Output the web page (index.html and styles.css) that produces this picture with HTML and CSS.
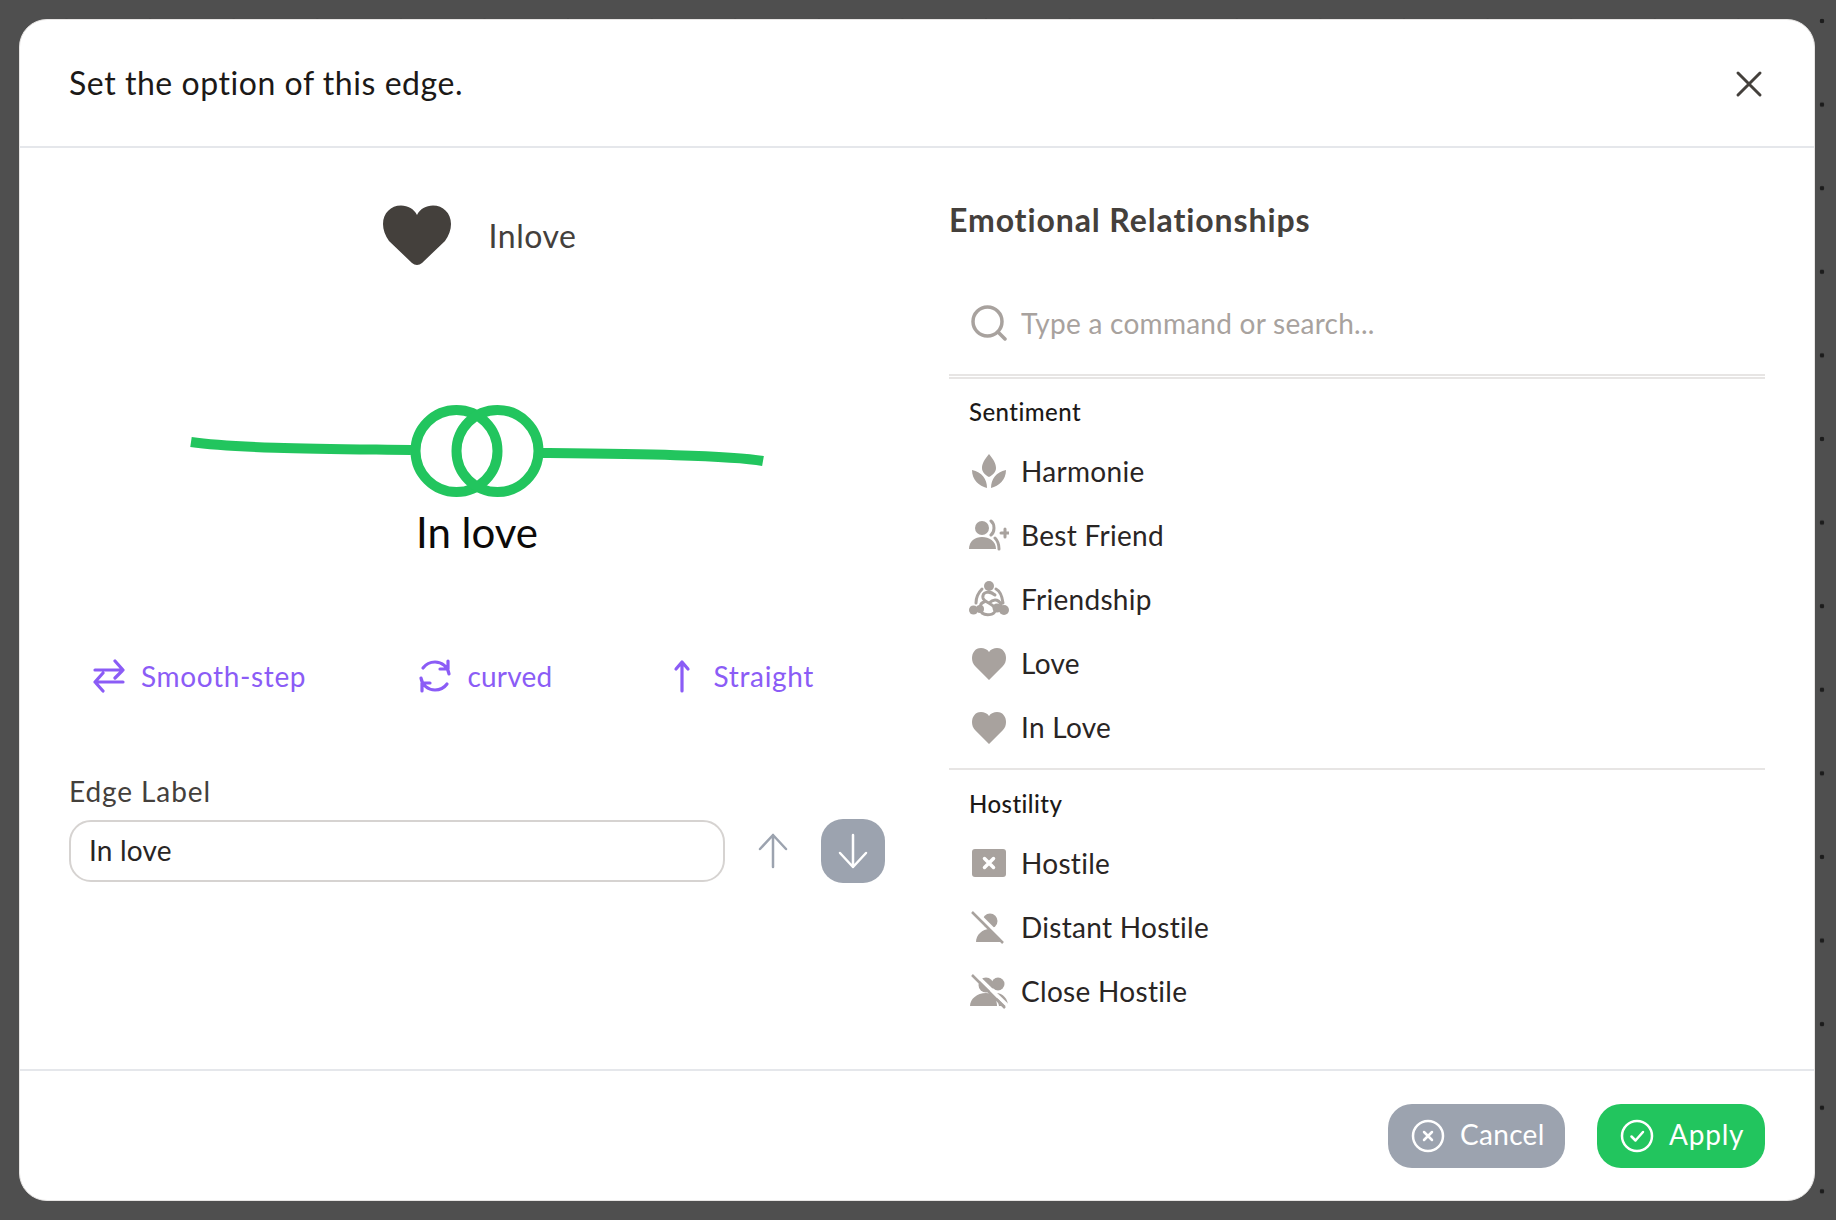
FILE: index.html
```html
<!DOCTYPE html>
<html lang="en">
<head>
<meta charset="utf-8">
<title>Edge options</title>
<link rel="stylesheet" href="styles.css">
</head>
<body>
<div class="backdrop">
  <div class="modal">
    <header class="modal-header">
      <h2 class="modal-title">Set the option of this edge.</h2>
      <button class="close-btn" aria-label="Close">
        <svg viewBox="0 0 28 28" class="close-icon"><path d="M3 3 25 25M25 3 3 25"/></svg>
      </button>
    </header>
    <main class="modal-body">
      <section class="left-col">
        <div class="selected-row">
          <svg class="selected-heart" viewBox="0 0 68 60"><path d="M34 10C31 4 25 .5 18 .5 8 .5 0 8 0 19c0 6 2 11 6 17l23 22c3 2.600 7 2.600 10 0l23-22c4-6 6-11 6-17C68 8 60 .5 50 .5 43 .5 37 4 34 10Z"/></svg>
          <span class="selected-name">Inlove</span>
        </div>
        <svg class="edge-preview" viewBox="0 0 816 110">
          <path class="edge-line" d="M122 47C170 54 280 54 342 55"/>
          <path class="edge-line" d="M473 58C560 59 660 60 694 66"/>
          <circle class="edge-ring" cx="387.500" cy="56" r="41"/>
          <circle class="edge-ring" cx="428.500" cy="56" r="41"/>
        </svg>
        <div class="edge-caption">In love</div>
        <div class="edge-types">
          <div class="edge-type edge-type-wide">
            <svg class="type-icon" viewBox="0 0 34 34"><path d="M3 11H31M23 2 31 11 23 19M31 23H3M11 14 3 23 11 32"/></svg>
            <span>Smooth-step</span>
          </div>
          <div class="edge-type edge-type-mid">
            <svg class="type-icon" viewBox="0 0 34 34"><path d="M31 15C30 8 24 3 17 3 12 3 8 5 5 9M30 2V10H22M3 19C4 26 10 31 17 31 22 31 26 29 29 25M4 32V24H12"/></svg>
            <span>curved</span>
          </div>
          <div class="edge-type edge-type-wide edge-type-last">
            <svg class="type-icon" viewBox="0 0 34 34"><path d="M17 32V3M11 10 17 3 23 10"/></svg>
            <span>Straight</span>
          </div>
        </div>
        <label class="field-label">Edge Label</label>
        <div class="field-row">
          <input class="field-input" value="In love">
          <button class="arrow-btn">
            <svg viewBox="0 0 32 36" class="arrow-icon"><path d="M16 34V2M3 16 16 2 29 16"/></svg>
          </button>
          <button class="arrow-btn arrow-btn-active">
            <svg viewBox="0 0 32 36" class="arrow-icon"><path d="M16 2V34M3 20 16 34 29 20"/></svg>
          </button>
        </div>
      </section>
      <section class="right-col">
        <h3 class="list-heading">Emotional Relationships</h3>
        <div class="search-row">
          <svg class="search-icon" viewBox="0 0 36 36"><circle cx="16.500" cy="16.500" r="14.500"/><path d="M27 27 34 34"/></svg>
          <input class="search-input" placeholder="Type a command or search...">
        </div>
        <div class="group group-first">
          <div class="group-title">Sentiment</div>
          <div class="item">
            <svg class="item-icon" viewBox="0 0 40 36"><path d="M20 1C15 7 13 11 13 15 13 19 16 22 20 24 24 22 27 19 27 15 27 11 25 7 20 1ZM3 17C3 27 10 33 18 35 18 26 13 19 3 17ZM37 17C37 27 30 33 22 35 22 26 27 19 37 17Z"/></svg>
            <span>Harmonie</span>
          </div>
          <div class="item">
            <svg class="item-icon" viewBox="0 0 40 36"><circle cx="13" cy="11" r="7"/><path d="M0 32C0 24 6 20 13 20 20 20 27 24 27 32Z"/><path class="thin" d="M22 4C26 7 26 15 22 18M30 32C30 27 29 24 26 21M36 12V20M32 16H40"/></svg>
            <span>Best Friend</span>
          </div>
          <div class="item">
            <svg class="item-icon" viewBox="0 0 40 36"><circle cx="20" cy="5" r="5"/><circle cx="4.500" cy="29" r="4.500"/><circle cx="11" cy="28" r="4"/><circle cx="35" cy="29" r="5"/><circle cx="28" cy="27" r="4.500"/><path class="thin" d="M13 8C9 12 7 16 7 22M27 8C31 10 33 14 34 22M26 14C20 9 13 11 14 17 15 22 28 23 26 30 25 34 17 35 13 32M13 32C10 27 11 22 15 21M20 22C26 16 31 20 32 24"/></svg>
            <span>Friendship</span>
          </div>
          <div class="item">
            <svg class="item-icon" viewBox="0 0 36 36"><path d="M10 3C4 3 1 8 1 13 1 16 2 19 4 21L18 35 32 21C34 19 35 16 35 13 35 8 32 3 26 3 23 3 20 4 18 7 16 4 13 3 10 3Z"/></svg>
            <span>Love</span>
          </div>
          <div class="item">
            <svg class="item-icon" viewBox="0 0 36 36"><path d="M10 3C4 3 1 8 1 13 1 16 2 19 4 21L18 35 32 21C34 19 35 16 35 13 35 8 32 3 26 3 23 3 20 4 18 7 16 4 13 3 10 3Z"/></svg>
            <span>In Love</span>
          </div>
        </div>
        <div class="group">
          <div class="group-title">Hostility</div>
          <div class="item">
            <svg class="item-icon" viewBox="0 0 36 36"><rect x="1" y="4" width="34" height="28" rx="3"/><path class="cross" d="M13.500 13.500 22.500 22.500M22.500 13.500 13.500 22.500"/></svg>
            <span>Hostile</span>
          </div>
          <div class="item">
            <svg class="item-icon" viewBox="0 0 36 36"><circle cx="19" cy="12" r="7.500"/><path d="M5 33C5 26 11 20 19 20 26 20 30 26 30 33Z"/><path class="slash-gap" d="M4 2 35 33"/><path class="slash" d="M1 3 32 34"/></svg>
            <span>Distant Hostile</span>
          </div>
          <div class="item">
            <svg class="item-icon" viewBox="0 0 40 36"><circle cx="17" cy="12" r="7.500"/><path d="M1 33C1 26 8 20 17 20 24 20 28 26 28 33Z"/><circle cx="29" cy="11" r="6.500"/><path d="M27 20C34 20 39 26 39 33H30Z"/><path class="slash-gap" d="M6 1 39 33"/><path class="slash" d="M3 2 36 35"/></svg>
            <span>Close Hostile</span>
          </div>
        </div>
      </section>
    </main>
    <footer class="modal-footer">
      <button class="action action-cancel">
        <svg class="action-icon" viewBox="0 0 34 34"><circle cx="17" cy="17" r="15"/><path d="M13 13 21 21M21 13 13 21"/></svg>
        <span>Cancel</span>
      </button>
      <button class="action action-apply">
        <svg class="action-icon" viewBox="0 0 34 34"><circle cx="17" cy="17" r="15"/><path d="M11.500 17.500 15.500 21.500 23 13"/></svg>
        <span>Apply</span>
      </button>
    </footer>
  </div>
</div>
</body>
</html>
```
FILE: styles.css
```css
* { box-sizing: border-box; }
html, body { margin: 0; height: 100%; }
body { font-family: "Lato", "Noto Sans", sans-serif; color: #292524; font-variant-ligatures: none; }
button { font-family: inherit; border: 0; background: none; padding: 0; font-variant-ligatures: none; }
input { font-family: inherit; font-variant-ligatures: none; }

.backdrop {
  height: 1220px;
  padding: 19px 21px 19px 19px;
  background-color: #4f4f4f;
  background-image: radial-gradient(circle at center, #1c1c1c 0, #1c1c1c 2px, transparent 2.6px);
  background-size: 83.6px 83.6px;
  background-position: 1780.2px -20.8px;
}
.modal {
  height: 100%;
  background: #fff;
  border-radius: 28px;
  border: 1px solid #e7e5e4;
  display: flex;
  flex-direction: column;
  overflow: hidden;
}
.modal-header {
  height: 128px;
  flex: none;
  border-bottom: 2px solid #e5e7eb;
  padding: 0 49px;
  display: flex;
  align-items: center;
  justify-content: space-between;
}
.modal-title { margin: 0 0 2px; font-size: 32px; font-weight: 400; color: #1c1917; letter-spacing: 0.55px; }
.close-btn { width: 28px; height: 28px; margin-right: 2px; margin-bottom: -2px; }
.close-icon { width: 28px; height: 28px; display: block; fill: none; stroke: #44403c; stroke-width: 3; stroke-linecap: round; }

.modal-body {
  flex: 1;
  display: grid;
  grid-template-columns: 816px 816px;
  column-gap: 64px;
  padding: 0 49px;
}
.left-col { display: flex; flex-direction: column; padding-top: 52px; }
.selected-row { display: flex; align-items: center; justify-content: center; gap: 38px; height: 70px; padding-left: 5px; }
.selected-heart { width: 68px; height: 60px; fill: #44403c; }
.selected-name { font-size: 32px; color: #44403c; letter-spacing: 0.5px; }
.edge-preview { width: 816px; height: 110px; display: block; margin-top: 125px; flex: none; }
.edge-line { fill: none; stroke: #22c55e; stroke-width: 10; }
.edge-ring { fill: none; stroke: #22c55e; stroke-width: 10; }
.edge-caption { font-size: 42px; line-height: 54px; text-align: center; color: #0c0a09; }
.edge-types { display: flex; justify-content: space-between; padding: 0 71px 0 23px; height: 48px; margin-top: 93px; }
.edge-type { display: flex; align-items: center; gap: 15px; color: #8b5cf6; font-size: 28px; letter-spacing: 0.2px; }
.edge-type-mid { margin-left: 0; }
.edge-type-wide { letter-spacing: 0.65px; }
.edge-type-last { gap: 15px; }
.type-icon { width: 34px; height: 34px; fill: none; stroke: #8b5cf6; stroke-width: 3.2; stroke-linecap: round; stroke-linejoin: round; }
.field-label { display: block; font-size: 28px; line-height: 38px; color: #44403c; margin-top: 72px; letter-spacing: 0.9px; }
.field-row { display: flex; align-items: center; margin-top: 9px; }
.field-input { width: 656px; height: 62px; border: 2px solid #d6d3d1; border-radius: 22px; padding: 0 18px 3px; font-size: 28px; color: #292524; outline: 0; letter-spacing: 0.2px; }
.arrow-btn { width: 64px; height: 64px; border-radius: 22px; margin-left: 16px; display: flex; align-items: center; justify-content: center; }
.arrow-btn-active { background: #9ca3af; margin-left: 0; }
.field-input + .arrow-btn { margin-left: 16px; margin-right: 16px; }
.arrow-icon { width: 32px; height: 36px; fill: none; stroke: #9ca3af; stroke-width: 2.500; stroke-linecap: round; stroke-linejoin: round; }
.arrow-btn-active .arrow-icon { stroke: #fff; }

.right-col { display: flex; flex-direction: column; padding-top: 48px; }
.list-heading { margin: 0; font-size: 32px; line-height: 48px; font-weight: 700; color: #44403c; letter-spacing: 0.9px; }
.search-row { height: 104px; margin-top: 28px; padding: 0 20px 0 22px; display: flex; align-items: center; gap: 14px; border-bottom: 2px solid #e7e5e4; }
.search-icon { width: 36px; height: 36px; flex: none; fill: none; stroke: #a8a29e; stroke-width: 3.5; stroke-linecap: round; }
.search-input { flex: 1; height: 48px; border: 0; outline: 0; padding: 0; font-size: 28px; color: #292524; letter-spacing: 0.26px; }
.search-input::placeholder { color: #a8a29e; opacity: 1; }
.group { padding: 16px 20px 0; }
.group-first { padding-top: 15px; border-top: 2px solid #e7e5e4; margin-top: 1px; border-bottom: 2px solid #e7e5e4; height: 393px; }
.group-title { font-size: 24px; line-height: 36px; font-weight: 500; color: #1c1917; margin-bottom: 9px; letter-spacing: 0.45px; }
.item { height: 64px; display: flex; align-items: center; gap: 12px; font-size: 28px; color: #292524; letter-spacing: 0.3px; }
.item-icon { width: 40px; height: 36px; flex: none; fill: #a8a29e; }
.item-icon .thin { fill: none; stroke: #a8a29e; stroke-width: 3; stroke-linecap: round; }
.item-icon .cross { fill: none; stroke: #fff; stroke-width: 3.500; stroke-linecap: round; }
.item-icon .slash { fill: none; stroke: #a8a29e; stroke-width: 2.500; }
.item-icon .slash-gap { fill: none; stroke: #fff; stroke-width: 3.5; }

.modal-footer {
  height: 131px;
  flex: none;
  border-top: 2px solid #e5e7eb;
  padding: 0 49px 0 0;
  display: flex;
  align-items: center;
  justify-content: flex-end;
  gap: 32px;
}
.action { height: 64px; border-radius: 24px; display: flex; align-items: center; gap: 15px; padding: 0 20px 3px 23px; color: #fff; font-size: 28px; letter-spacing: 0.3px; }
.action .action-icon { margin-top: 3px; }
.action-cancel { background: #9ca3af; width: 177px; }
.action-apply { background: #22c55e; width: 168px; letter-spacing: 0.8px; }
.action-icon { width: 34px; height: 34px; flex: none; fill: none; stroke: #fff; stroke-width: 2.500; stroke-linecap: round; stroke-linejoin: round; }
```
